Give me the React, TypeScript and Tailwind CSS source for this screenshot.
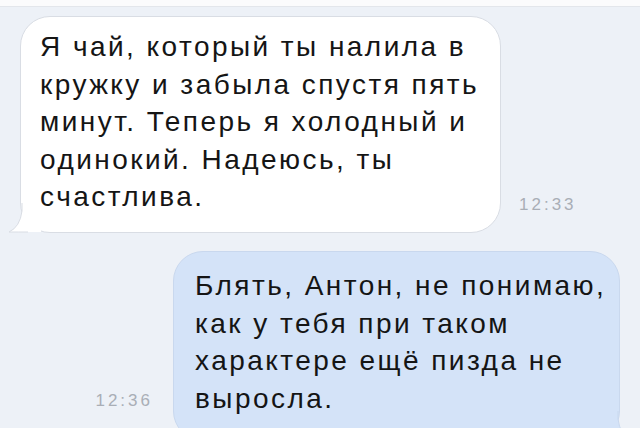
import React from 'react';

const incoming = [
  'Я чай, который ты налила в',
  'кружку и забыла спустя пять',
  'минут. Теперь я холодный и',
  'одинокий. Надеюсь, ты',
  'счастлива.',
];

const outgoing = [
  'Блять, Антон, не понимаю,',
  'как у тебя при таком',
  'характере ещё пизда не',
  'выросла.',
];

const font = { fontFamily: '"Liberation Sans", Arial, sans-serif' };

const Time = ({ children, pad }: { children: React.ReactNode; pad: string }) => (
  <span className={`text-[17px] leading-none tracking-[3px] text-[#a9aeb6] ${pad}`}>{children}</span>
);

const Line = ({ text }: { text: string }) => (
  <div className="text-[28px] leading-[37.5px] tracking-[2.45px] text-[#151515] whitespace-nowrap">{text}</div>
);

export default function App() {
  return (
    <div className="w-[640px] h-[428px] overflow-hidden bg-[#edf1f7]" style={font}>
      <div className="h-[7px] bg-[#fbfbfc] border-b border-[#e3e6eb]" />

      <div className="flex flex-col gap-[18px] pt-[9px]">
        {/* incoming */}
        <div className="flex items-end gap-[18px] pl-[20px]">
          <div className="relative w-[481px] h-[217px] bg-white border border-[#d9dde4] rounded-[30px] pl-[19px] pt-[11px]">
            {incoming.map((l) => (
              <Line key={l} text={l} />
            ))}
            <svg className="absolute left-[-13px] bottom-[-1px]" width="34" height="30" viewBox="0 0 34 30">
              <path d="M33 0 L33 29 L20 29 Q10 29 1 29 Q12 24 14 8 L14 0 Z" fill="#fff" />
              <path d="M14 0 L14 8 Q12 24 1 29 Q10 29 20 29" fill="none" stroke="#d9dde4" strokeWidth="1" />
            </svg>
          </div>
          <Time pad="pb-[20px]">12:33</Time>
        </div>

        {/* outgoing */}
        <div className="flex items-end justify-end gap-[20px] pr-[20px]">
          <Time pad="pb-[32px]">12:36</Time>
          <div className="relative w-[447px] h-[190px] bg-[#d4e3f8] border border-[#c9d8ee] rounded-[30px] pl-[21px] pt-[15px]">
            {outgoing.map((l) => (
              <Line key={l} text={l} />
            ))}
            <svg className="absolute right-[-13px] bottom-[-1px]" width="34" height="30" viewBox="0 0 34 30">
              <path d="M1 0 L1 29 L14 29 Q24 29 33 29 Q22 24 20 8 L20 0 Z" fill="#d4e3f8" />
              <path d="M20 0 L20 8 Q22 24 33 29 Q24 29 14 29" fill="none" stroke="#c9d8ee" strokeWidth="1" />
            </svg>
          </div>
        </div>
      </div>
    </div>
  );
}
